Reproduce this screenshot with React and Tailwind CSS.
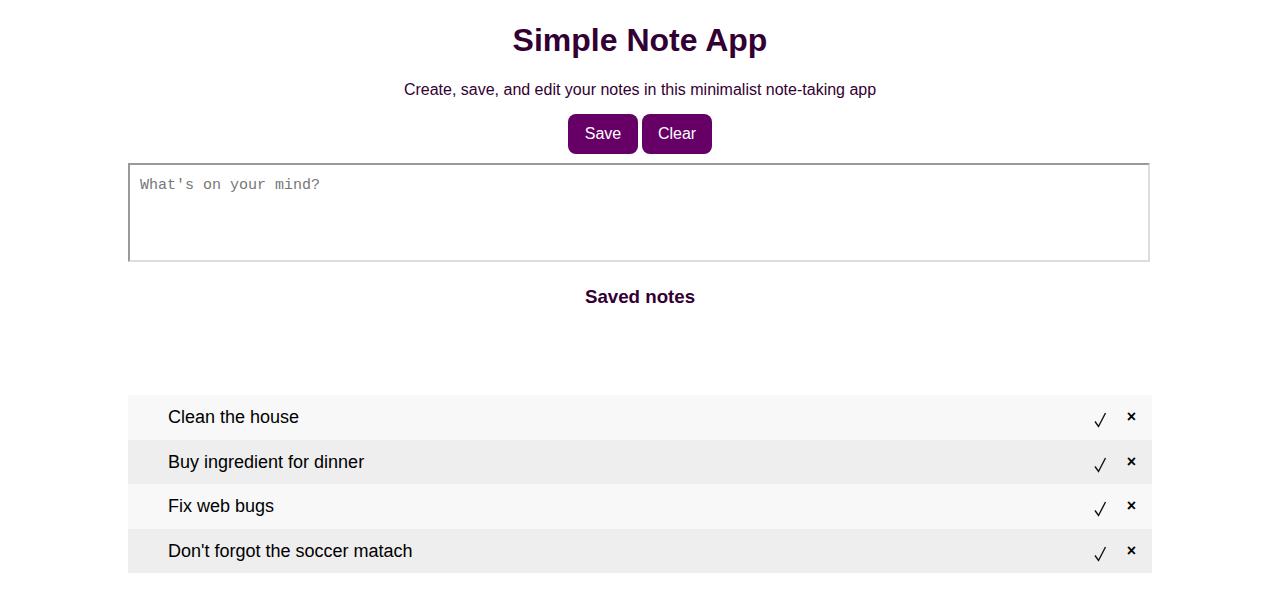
import { useState } from 'react';

const initialNotes = [
  'Clean the house',
  'Buy ingredient for dinner',
  'Fix web bugs',
  "Don't forgot the soccer matach",
];

function CheckMark() {
  return (
    <svg width="13" height="16" viewBox="0 0 13 16" className="mt-[6px] mr-[20px]">
      <path d="M1 9.5 L4.5 14.5 L11.5 1" fill="none" stroke="#111" strokeWidth="1.4" strokeLinejoin="miter" />
    </svg>
  );
}

export default function App() {
  const [notes, setNotes] = useState(initialNotes);
  const [text, setText] = useState('');

  const save = () => {
    if (!text.trim()) return;
    setNotes([...notes, text.trim()]);
    setText('');
  };

  return (
    <div className="min-h-screen bg-white font-['Liberation_Sans',Arial,sans-serif] text-[#330033]">
      <div className="mx-auto w-[1024px] flex flex-col items-center">
        <h1 className="mt-[22px] text-[32px] leading-[37px] font-bold">Simple Note App</h1>
        <p className="mt-[22px] text-base leading-[18px]">
          Create, save, and edit your notes in this minimalist note-taking app
        </p>
        <div className="mt-[15px] flex gap-[4px]">
          <button
            onClick={save}
            className="w-[70px] h-[40px] rounded-lg bg-[#660066] text-white text-base"
          >
            Save
          </button>
          <button
            onClick={() => setText('')}
            className="w-[70px] h-[40px] rounded-lg bg-[#660066] text-white text-base"
          >
            Clear
          </button>
        </div>
        {/* note input */}
        <textarea
          value={text}
          onChange={(e) => setText(e.target.value)}
          placeholder="What's on your mind?"
          className="mt-[9px] self-start w-[1022px] h-[99px] border-2 border-t-[#999] border-l-[#999] border-r-[#ddd] border-b-[#ddd] px-[10px] pt-[12px] pb-[10px] text-[15px] leading-[18px] font-['Liberation_Mono','Courier_New',monospace] text-black placeholder:text-[#777] resize-none outline-none"
        />
        <h2 className="mt-[24px] text-[18.72px] leading-[22px] font-bold">Saved notes</h2>
        <ul className="mt-[87px] w-full">
          {notes.map((note, i) => (
            <li
              key={i}
              className={`flex items-center h-[44.5px] pl-[40px] pr-[16px] text-lg text-black ${
                i % 2 === 0 ? 'bg-[#f8f8f8]' : 'bg-[#eeeeee]'
              }`}
            >
              <span className="flex-1">{note}</span>
              <CheckMark />
              <button
                onClick={() => setNotes(notes.filter((_, j) => j !== i))}
                className="text-base font-bold leading-none"
              >
                ×
              </button>
            </li>
          ))}
        </ul>
      </div>
    </div>
  );
}
